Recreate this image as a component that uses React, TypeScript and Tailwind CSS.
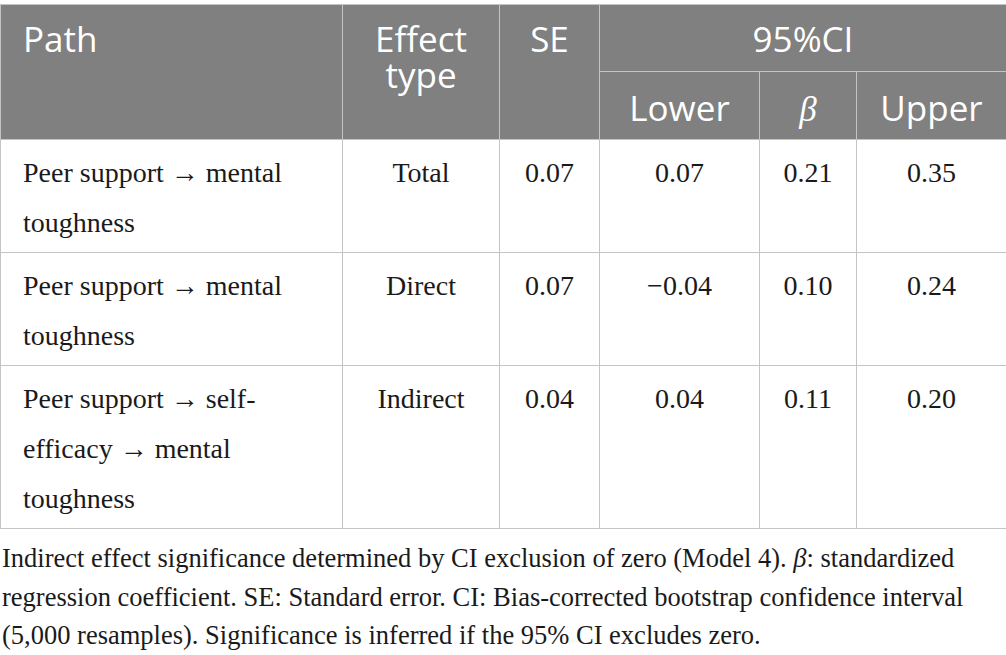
import React from "react";

const serif = { fontFamily: '"Liberation Serif", "Times New Roman", serif' };

const rows = [
  { path: "Peer support → mental toughness", type: "Total", se: "0.07", lower: "0.07", beta: "0.21", upper: "0.35" },
  { path: "Peer support → mental toughness", type: "Direct", se: "0.07", lower: "−0.04", beta: "0.10", upper: "0.24" },
  { path: "Peer support → self-efficacy → mental toughness", type: "Indirect", se: "0.04", lower: "0.04", beta: "0.11", upper: "0.20" },
];

export default function App() {
  return (
    <div className="w-[1006px] h-[655px] bg-white overflow-hidden pt-[4px]">
      <table className="table-fixed border-collapse w-[1006px]">
        <colgroup>
          <col className="w-[342px]" />
          <col className="w-[157px]" />
          <col className="w-[100px]" />
          <col className="w-[160px]" />
          <col className="w-[97px]" />
          <col className="w-[150px]" />
        </colgroup>
        <thead
          className="bg-[#808080] text-white text-[35px] leading-[36px]"
          style={{ fontFamily: '"Open Sans", "Noto Sans", sans-serif' }}
        >
          <tr className="h-[67px]">
            <th rowSpan={2} className="border border-[#c4c4c4] align-top text-left font-normal pl-[22px] pt-[16px]">
              Path
            </th>
            <th rowSpan={2} className="border border-[#c4c4c4] align-top text-center font-normal pt-[16px] px-2">
              Effect type
            </th>
            <th rowSpan={2} className="border border-[#c4c4c4] align-top text-center font-normal pt-[16px]">
              SE
            </th>
            <th colSpan={3} className="border border-[#c4c4c4] align-top text-center font-normal pt-[16px]">
              95%CI
            </th>
          </tr>
          <tr className="h-[68px]">
            <th className="border border-[#c4c4c4] align-top text-center font-normal pt-[18px]">Lower</th>
            <th className="border border-[#c4c4c4] align-top text-center font-normal pt-[18px]">
              <span className="italic" style={serif}>β</span>
            </th>
            <th className="border border-[#c4c4c4] align-top text-center font-normal pt-[18px]">Upper</th>
          </tr>
        </thead>
        <tbody className="text-[#1a1a1a] text-[28px] leading-[50px]" style={serif}>
          {rows.map((r, i) => (
            <tr key={i}>
              <td className="border border-[#c4c4c4] align-top text-left pl-[22px] pr-[20px] pt-[8px] pb-[4px]">{r.path}</td>
              <td className="border border-[#c4c4c4] align-top text-center pt-[8px]">{r.type}</td>
              <td className="border border-[#c4c4c4] align-top text-center pt-[8px]">{r.se}</td>
              <td className="border border-[#c4c4c4] align-top text-center pt-[8px]">{r.lower}</td>
              <td className="border border-[#c4c4c4] align-top text-center pt-[8px]">{r.beta}</td>
              <td className="border border-[#c4c4c4] align-top text-center pt-[8px]">{r.upper}</td>
            </tr>
          ))}
        </tbody>
      </table>
      <p className="mt-[10px] pl-[2px] text-[26.5px] leading-[38.5px] text-[#1a1a1a] whitespace-nowrap" style={serif}>
        Indirect effect significance determined by CI exclusion of zero (Model 4). <span className="italic">β</span>: standardized
        <br />
        regression coefficient. SE: Standard error. CI: Bias-corrected bootstrap confidence interval
        <br />
        (5,000 resamples). Significance is inferred if the 95% CI excludes zero.
      </p>
    </div>
  );
}
